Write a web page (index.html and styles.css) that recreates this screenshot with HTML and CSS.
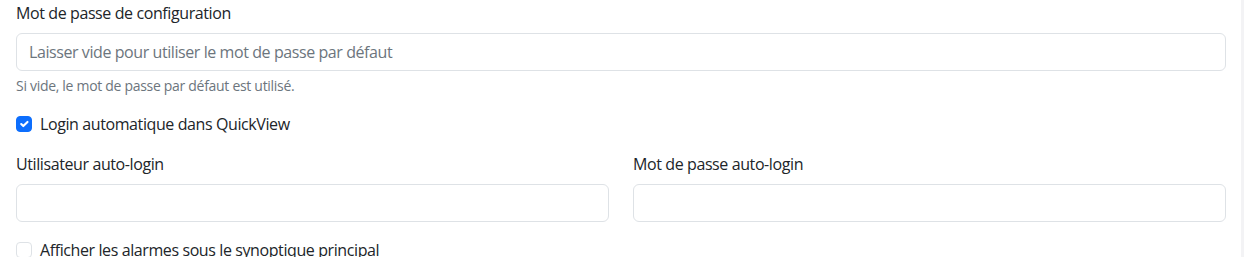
FILE: index.html
```html
<!DOCTYPE html>
<html lang="fr">
<head>
<meta charset="utf-8">
<title>Configuration</title>
<link rel="stylesheet" href="styles.css">
</head>
<body>
<div class="page">
  <form class="form">
    <div class="field mb">
      <label class="label" for="cfgpw">Mot de passe de configuration</label>
      <input class="control" id="cfgpw" type="password" placeholder="Laisser vide pour utiliser le mot de passe par défaut">
      <div class="help">Si vide, le mot de passe par défaut est utilisé.</div>
    </div>
    <div class="check mb">
      <input class="check-input" type="checkbox" id="autologin" checked>
      <label class="check-label" for="autologin">Login automatique dans QuickView</label>
    </div>
    <div class="row mb">
      <div class="field">
        <label class="label" for="user">Utilisateur auto-login</label>
        <input class="control" id="user" type="text">
      </div>
      <div class="field">
        <label class="label" for="pw">Mot de passe auto-login</label>
        <input class="control" id="pw" type="password">
      </div>
    </div>
    <div class="check">
      <input class="check-input" type="checkbox" id="alarms">
      <label class="check-label" for="alarms">Afficher les alarmes sous le synoptique principal</label>
    </div>
  </form>
  <div class="edge"></div>
</div>
</body>
</html>
```
FILE: styles.css
```css
* { box-sizing: border-box; }
html, body { margin: 0; padding: 0; background: #fff; }
body {
  font-family: "Open Sans", "Noto Sans", "Liberation Sans", sans-serif;
  font-size: 16px;
  line-height: 1.5;
  letter-spacing: -0.4px;
  color: #212529;
  overflow: hidden;
}
.page {
  display: flex;
  height: 257px;
}
.form {
  flex: 1;
  padding: 1px 15px 0 16px;
}
.edge {
  width: 3px;
  background: #f3f3f5;
}
.mb { margin-bottom: 16px; }
.field { display: flex; flex-direction: column; }
.label {
  display: block;
  margin-bottom: 8px;
  font-size: 16px;
  line-height: 24px;
}
.control {
  display: block;
  width: 100%;
  height: 38px;
  padding: 6px 12px;
  font: inherit;
  font-size: 16px;
  line-height: 24px;
  letter-spacing: -0.42px;
  color: #212529;
  background: #fff;
  border: 1px solid #dee2e6;
  border-radius: 6px;
  outline: none;
}
.control::placeholder { color: #6c757d; opacity: 1; }
.help {
  margin-top: 4px;
  font-size: 14px;
  line-height: 21px;
  letter-spacing: -0.3px;
  color: #6c757d;
}
.row {
  display: grid;
  grid-template-columns: 1fr 1fr;
  column-gap: 24px;
}
.check {
  display: flex;
  align-items: flex-start;
  min-height: 24px;
}
.check-input {
  appearance: none;
  -webkit-appearance: none;
  width: 16px;
  height: 16px;
  margin: 4px 8px 0 0;
  border: 1px solid #dee2e6;
  border-radius: 4px;
  background: #fff;
  flex: none;
}
.check-input:checked {
  background-color: #0d6efd;
  border-color: #0d6efd;
  background-image: url("data:image/svg+xml,%3csvg xmlns='http://www.w3.org/2000/svg' viewBox='0 0 20 20'%3e%3cpath fill='none' stroke='%23fff' stroke-linecap='round' stroke-linejoin='round' stroke-width='3' d='m6 10 3 3 6-6'/%3e%3c/svg%3e");
  background-size: 100% 100%;
}
.check-label {
  font-size: 16px;
  line-height: 24px;
}
```
